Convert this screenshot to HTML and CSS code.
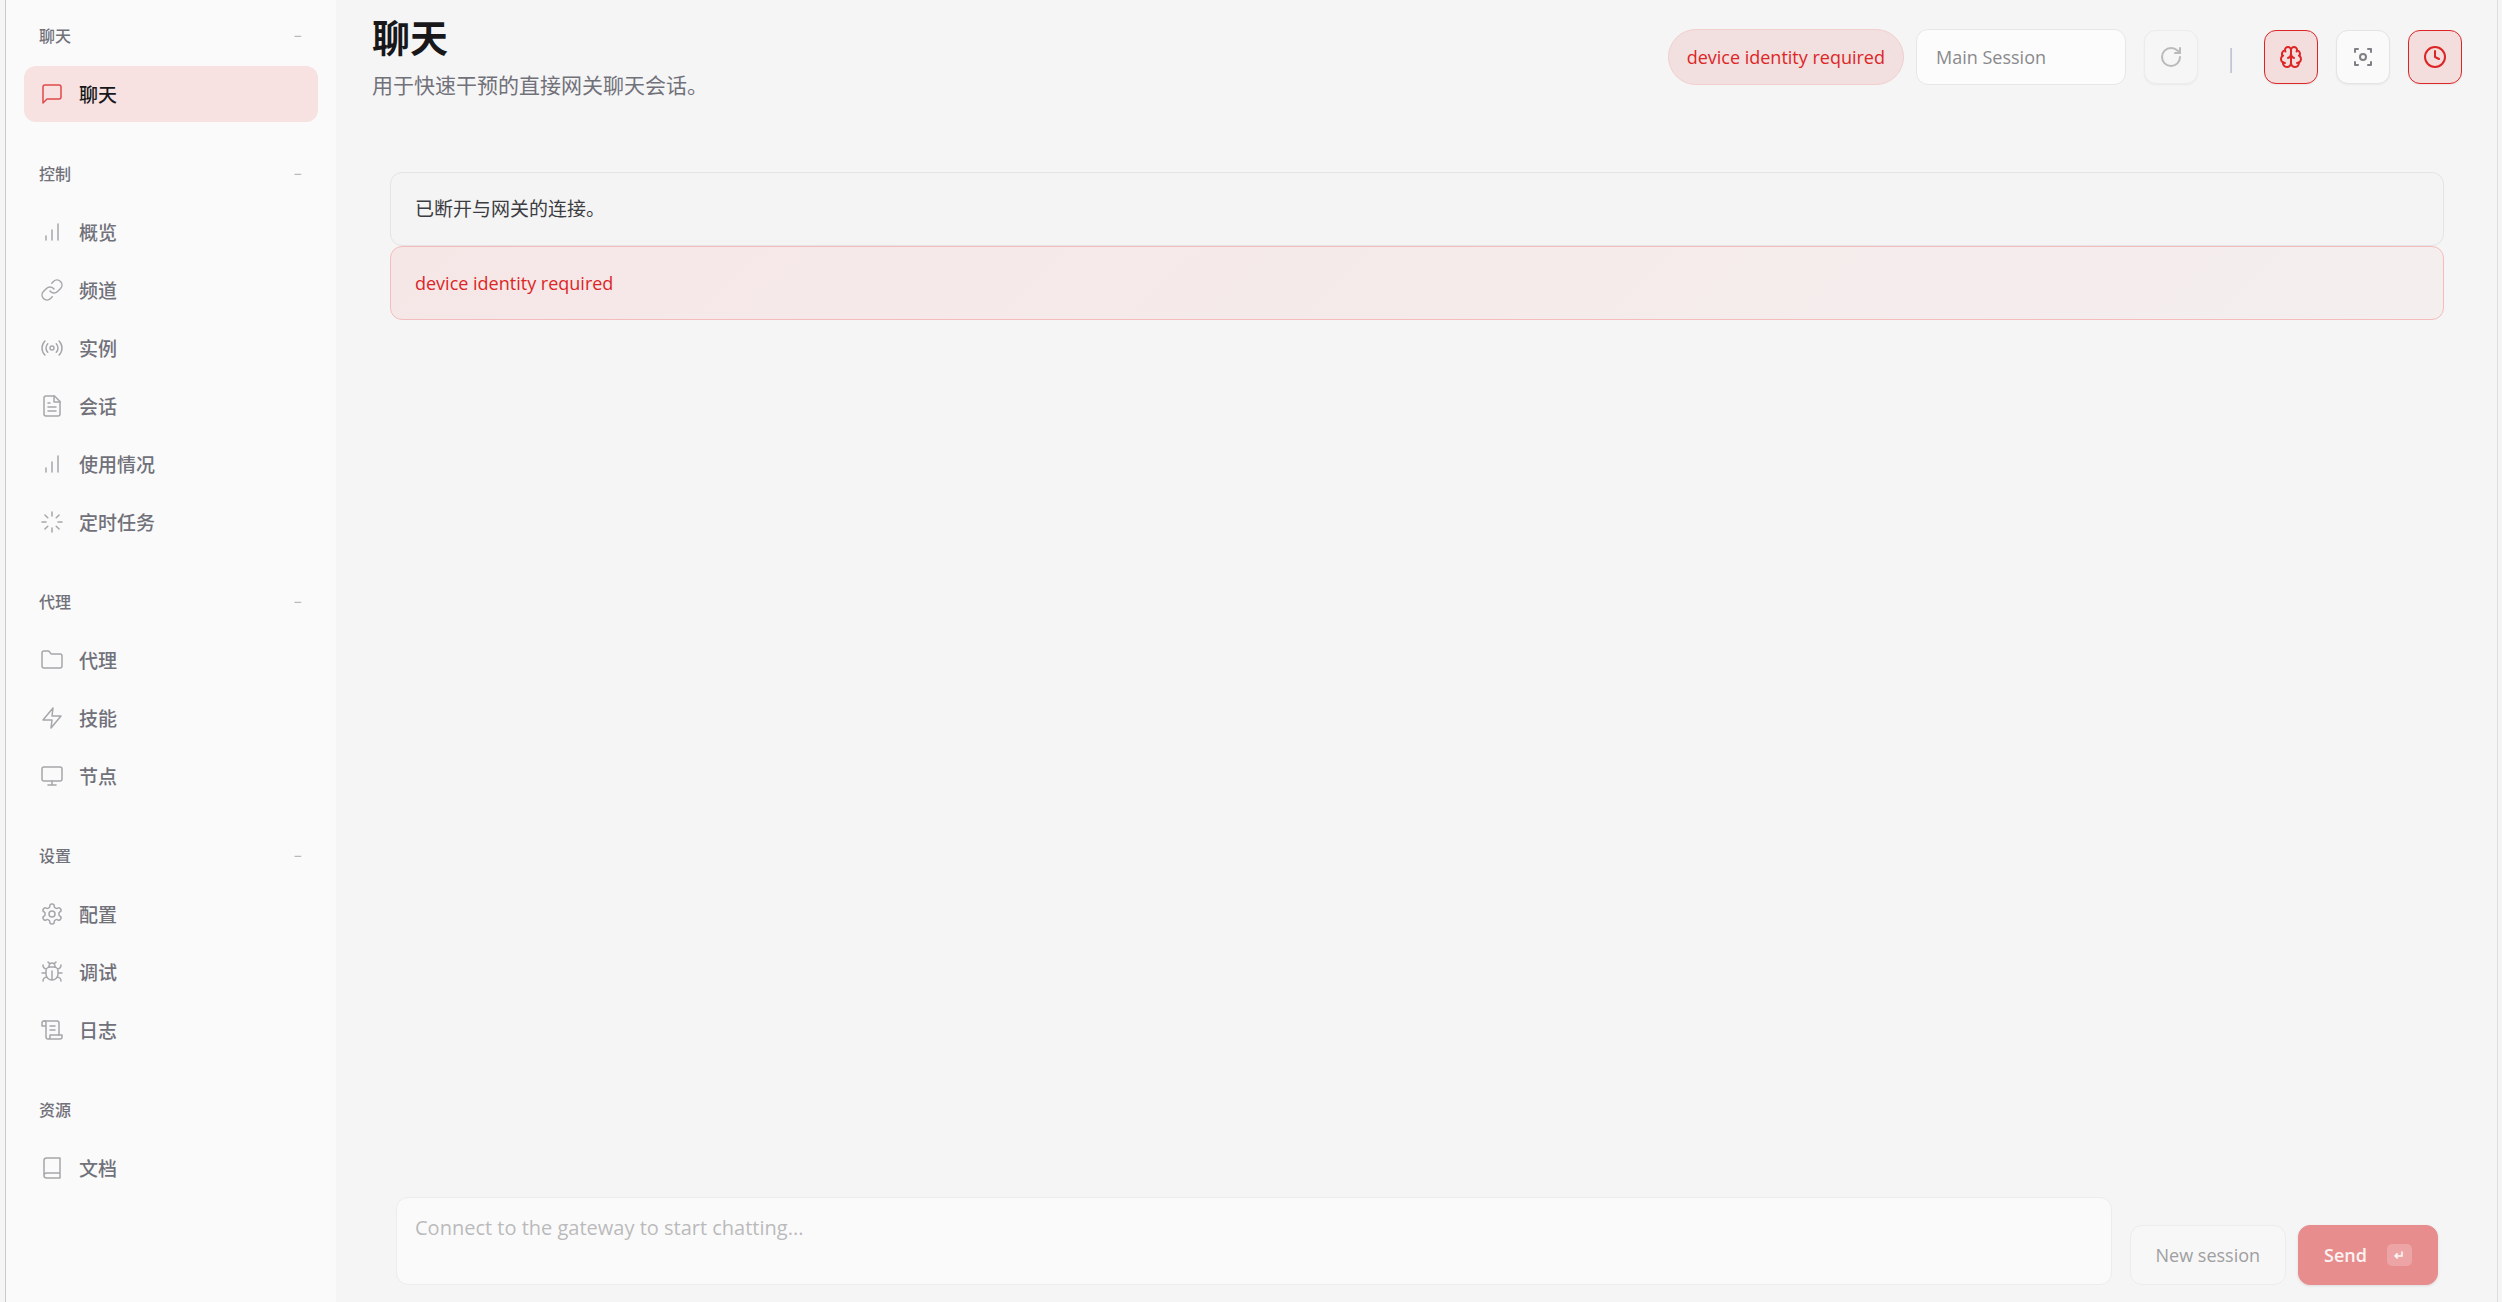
FILE: index.html
```html
<!DOCTYPE html>
<html lang="zh-CN">
  <head>
    <meta charset="UTF-8" />
    <meta name="viewport" content="width=device-width, initial-scale=1.0" />
    <title>聊天</title>
    <link rel="stylesheet" href="styles.css">
  </head>
  <body>
<div class="shell">
  <nav class="sidebar">
    <div class="nav-group">
      <button type="button" class="nav-label"><span>聊天</span><span class="nav-toggle">−</span></button>
      <a href="#chat" class="nav-item active">
        <svg class="icon" viewBox="0 0 24 24"><path d="M21 15a2 2 0 0 1-2 2H7l-4 4V5a2 2 0 0 1 2-2h14a2 2 0 0 1 2 2z"/></svg>
        <span>聊天</span>
      </a>
    </div>

    <div class="nav-group">
      <button type="button" class="nav-label"><span>控制</span><span class="nav-toggle">−</span></button>
      <a href="#overview" class="nav-item">
        <svg class="icon" viewBox="0 0 24 24"><path d="M12 20V10M18 20V4M6 20v-4"/></svg>
        <span>概览</span>
      </a>
      <a href="#channels" class="nav-item">
        <svg class="icon" viewBox="0 0 24 24"><path d="M10 13a5 5 0 0 0 7.54.54l3-3a5 5 0 0 0-7.07-7.07l-1.72 1.71"/><path d="M14 11a5 5 0 0 0-7.54-.54l-3 3a5 5 0 0 0 7.07 7.07l1.71-1.71"/></svg>
        <span>频道</span>
      </a>
      <a href="#instances" class="nav-item">
        <svg class="icon" viewBox="0 0 24 24"><circle cx="12" cy="12" r="2"/><path d="M16.24 7.76a6 6 0 0 1 0 8.49M7.76 16.24a6 6 0 0 1 0-8.49M19.07 4.93a10 10 0 0 1 0 14.14M4.93 19.07a10 10 0 0 1 0-14.14"/></svg>
        <span>实例</span>
      </a>
      <a href="#sessions" class="nav-item">
        <svg class="icon" viewBox="0 0 24 24"><path d="M14.5 2H6a2 2 0 0 0-2 2v16a2 2 0 0 0 2 2h12a2 2 0 0 0 2-2V7.5z"/><path d="M14 2v6h6M16 13H8M16 17H8M10 9H8"/></svg>
        <span>会话</span>
      </a>
      <a href="#usage" class="nav-item">
        <svg class="icon" viewBox="0 0 24 24"><path d="M12 20V10M18 20V4M6 20v-4"/></svg>
        <span>使用情况</span>
      </a>
      <a href="#cron" class="nav-item">
        <svg class="icon" viewBox="0 0 24 24"><path d="M12 2v4M12 18v4M4.93 4.93l2.83 2.83M16.24 16.24l2.83 2.83M2 12h4M18 12h4M4.93 19.07l2.83-2.83M16.24 7.76l2.83-2.83"/></svg>
        <span>定时任务</span>
      </a>
    </div>

    <div class="nav-group">
      <button type="button" class="nav-label"><span>代理</span><span class="nav-toggle">−</span></button>
      <a href="#agents" class="nav-item">
        <svg class="icon" viewBox="0 0 24 24"><path d="M20 20a2 2 0 0 0 2-2V8a2 2 0 0 0-2-2h-7.9a2 2 0 0 1-1.69-.9L9.6 3.9A2 2 0 0 0 7.93 3H4a2 2 0 0 0-2 2v13a2 2 0 0 0 2 2Z"/></svg>
        <span>代理</span>
      </a>
      <a href="#skills" class="nav-item">
        <svg class="icon" viewBox="0 0 24 24"><path d="M13 2L3 14h9l-1 8 10-12h-9l1-8z"/></svg>
        <span>技能</span>
      </a>
      <a href="#nodes" class="nav-item">
        <svg class="icon" viewBox="0 0 24 24"><rect x="2" y="3" width="20" height="14" rx="2"/><path d="M8 21h8M12 17v4"/></svg>
        <span>节点</span>
      </a>
    </div>

    <div class="nav-group">
      <button type="button" class="nav-label"><span>设置</span><span class="nav-toggle">−</span></button>
      <a href="#config" class="nav-item">
        <svg class="icon" viewBox="0 0 24 24"><path d="M12.22 2h-.44a2 2 0 0 0-2 2v.18a2 2 0 0 1-1 1.73l-.43.25a2 2 0 0 1-2 0l-.15-.08a2 2 0 0 0-2.73.73l-.22.38a2 2 0 0 0 .73 2.73l.15.1a2 2 0 0 1 1 1.72v.51a2 2 0 0 1-1 1.74l-.15.09a2 2 0 0 0-.73 2.73l.22.38a2 2 0 0 0 2.73.73l.15-.08a2 2 0 0 1 2 0l.43.25a2 2 0 0 1 1 1.73V20a2 2 0 0 0 2 2h.44a2 2 0 0 0 2-2v-.18a2 2 0 0 1 1-1.73l.43-.25a2 2 0 0 1 2 0l.15.08a2 2 0 0 0 2.73-.73l.22-.39a2 2 0 0 0-.73-2.73l-.15-.08a2 2 0 0 1-1-1.74v-.5a2 2 0 0 1 1-1.74l.15-.09a2 2 0 0 0 .73-2.73l-.22-.38a2 2 0 0 0-2.73-.73l-.15.08a2 2 0 0 1-2 0l-.43-.25a2 2 0 0 1-1-1.73V4a2 2 0 0 0-2-2z"/><circle cx="12" cy="12" r="3"/></svg>
        <span>配置</span>
      </a>
      <a href="#debug" class="nav-item">
        <svg class="icon" viewBox="0 0 24 24"><path d="m8 2 1.88 1.88M14.12 3.88 16 2M9 7.13v-1a3.003 3.003 0 1 1 6 0v1"/><path d="M12 20c-3.3 0-6-2.7-6-6v-3a4 4 0 0 1 4-4h4a4 4 0 0 1 4 4v3c0 3.3-2.7 6-6 6M12 20v-9M6.53 9C4.6 8.8 3 7.1 3 5M6 13H2M3 21c0-2.1 1.7-3.9 3.8-4M20.97 5c0 2.1-1.6 3.8-3.5 4M22 13h-4M17.2 17c2.1.1 3.8 1.9 3.8 4"/></svg>
        <span>调试</span>
      </a>
      <a href="#logs" class="nav-item">
        <svg class="icon" viewBox="0 0 24 24"><path d="M8 21h12a2 2 0 0 0 2-2v-2H10v2a2 2 0 1 1-4 0V5a2 2 0 1 0-4 0v3h4"/><path d="M19 17V5a2 2 0 0 0-2-2H4M15 8h-5M15 12h-5"/></svg>
        <span>日志</span>
      </a>
    </div>

    <div class="nav-group">
      <div class="nav-label"><span>资源</span></div>
      <a href="#docs" class="nav-item">
        <svg class="icon" viewBox="0 0 24 24"><path d="M4 19.5v-15A2.5 2.5 0 0 1 6.5 2H20v20H6.5a2.5 2.5 0 0 1 0-5H20"/></svg>
        <span>文档</span>
      </a>
    </div>
  </nav>

  <main class="content">
    <header class="content-header">
      <div class="heading">
        <h1>聊天</h1>
        <p>用于快速干预的直接网关聊天会话。</p>
      </div>
      <div class="controls">
        <span class="pill">device identity required</span>
        <select class="session-select" aria-label="Session" disabled>
          <option>Main Session</option>
        </select>
        <button type="button" class="btn-icon" aria-label="Refresh" disabled>
          <svg class="icon" viewBox="0 0 24 24"><path d="M21 12a9 9 0 1 1-9-9c2.52 0 4.93 1 6.74 2.74L21 8"/><path d="M21 3v5h-5"/></svg>
        </button>
        <span class="separator">|</span>
        <button type="button" class="btn-icon on" aria-label="Thinking">
          <svg class="icon" viewBox="0 0 24 24"><path d="M12 5a3 3 0 1 0-5.997.125 4 4 0 0 0-2.526 5.77 4 4 0 0 0 .556 6.588A4 4 0 1 0 12 18Z"/><path d="M12 5a3 3 0 1 1 5.997.125 4 4 0 0 1 2.526 5.77 4 4 0 0 1-.556 6.588A4 4 0 1 1 12 18Z"/><path d="M15 13a4.5 4.5 0 0 1-3-4 4.5 4.5 0 0 1-3 4M17.599 6.5a3 3 0 0 0 .399-1.375M6.003 5.125A3 3 0 0 0 6.401 6.5M3.477 10.896a4 4 0 0 1 .585-.396M19.938 10.5a4 4 0 0 1 .585.396M6 18a4 4 0 0 1-1.967-.516M19.967 17.484A4 4 0 0 1 18 18"/></svg>
        </button>
        <button type="button" class="btn-icon" aria-label="Focus">
          <svg class="icon" viewBox="0 0 24 24"><path d="M4 7V4h3M20 7V4h-3M4 17v3h3M20 17v3h-3"/><circle cx="12" cy="12" r="3"/></svg>
        </button>
        <button type="button" class="btn-icon on" aria-label="Cron sessions">
          <svg class="icon" viewBox="0 0 24 24"><circle cx="12" cy="12" r="10"/><path d="M12 6v6l4 2"/></svg>
        </button>
      </div>
    </header>

    <section class="chat">
      <div class="callout">已断开与网关的连接。</div>
      <div class="callout danger">device identity required</div>
      <div class="thread"></div>
      <form class="compose">
        <textarea aria-label="Message" placeholder="Connect to the gateway to start chatting..." disabled></textarea>
        <button type="button" class="btn" disabled>New session</button>
        <button type="submit" class="btn primary" disabled>Send <kbd>↵</kbd></button>
      </form>
    </section>
  </main>
</div>
  </body>
</html>
```

FILE: styles.css
```css
* {
  margin: 0;
  padding: 0;
  box-sizing: border-box;
}

body {
  background-color: #f5f5f5;
  font-family: "Open Sans", "Noto Sans CJK SC", sans-serif;
  font-size: 19px;
  color: #3c3c43;
}

button,
select,
textarea,
kbd {
  font-family: inherit;
  font-size: 18px;
}

.shell {
  display: grid;
  grid-template-columns: 330px 1fr;
  height: 100vh;
  margin: 0 4px 0 5px;
  border-left: 1px solid #cacaca;
  border-right: 1px solid #dedede;
  overflow: hidden;
}

.icon {
  width: 24px;
  height: 24px;
  fill: none;
  stroke: currentColor;
  stroke-width: 1.5;
  stroke-linecap: round;
  stroke-linejoin: round;
  flex: none;
}

/* sidebar */
.sidebar {
  background-color: #fafafa;
  padding: 17px 18px 24px;
}

.nav-group {
  display: flex;
  flex-direction: column;
  gap: 2px;
  margin-bottom: 33px;
}

.nav-label {
  display: flex;
  justify-content: space-between;
  align-items: center;
  height: 36px;
  padding: 0 16px 0 15px;
  margin-bottom: 11px;
  border: none;
  background: none;
  font-size: 16px;
  font-weight: 500;
  color: #71717a;
}

.nav-toggle {
  font-size: 14px;
  color: #a9a9af;
}

.nav-item {
  display: flex;
  align-items: center;
  gap: 15px;
  height: 56px;
  padding: 0 16px;
  border-radius: 12px;
  font-weight: 500;
  color: #71717a;
  text-decoration: none;
}

.nav-item .icon {
  color: #a6a6ab;
}

.nav-item.active {
  background-color: #f7e1e1;
  color: #18181b;
}

.nav-item.active .icon {
  color: #e04a4a;
}

/* content */
.content {
  display: flex;
  flex-direction: column;
  min-width: 0;
  padding: 12px 35px 17px 36px;
}

.content-header {
  display: flex;
  justify-content: space-between;
  align-items: flex-start;
  height: 160px;
}

.heading h1 {
  font-size: 38px;
  line-height: 50px;
  color: #18181b;
}

.heading p {
  font-size: 21px;
  line-height: 30px;
  margin-top: 8px;
  color: #71717a;
}

.controls {
  display: flex;
  align-items: center;
  gap: 18px;
  margin-top: 17px;
}

.pill {
  height: 56px;
  margin-right: -6px;
  padding: 0 18px;
  border: 1px solid #f2cfcf;
  border-radius: 28px;
  background-color: #f2dfdf;
  color: #dc2626;
  font-size: 18px;
  font-weight: 500;
  line-height: 54px;
}

.session-select {
  appearance: none;
  width: 210px;
  height: 56px;
  padding: 0 19px;
  border: 1px solid #e7e7e9;
  border-radius: 12px;
  background-color: #fcfcfc;
  color: #8a8a8d;
  opacity: 1;
}

.btn-icon {
  display: flex;
  justify-content: center;
  align-items: center;
  width: 54px;
  height: 54px;
  border: 1px solid #e4e4e7;
  border-radius: 12px;
  background-color: #fafafa;
  box-shadow: 0 1px 2px rgba(0, 0, 0, 0.05);
  color: #7f7f86;
}

.btn-icon .icon {
  stroke-width: 2;
}

.btn-icon:disabled {
  border-color: #ececed;
  background-color: #f6f6f6;
  color: #bababc;
}

.btn-icon.on {
  border-color: #dc2626;
  background-color: #f3dddd;
  color: #dc2626;
}

.separator {
  width: 30px;
  text-align: center;
  font-size: 26px;
  font-weight: 300;
  color: #a9b3c4;
}

/* chat */
.chat {
  display: flex;
  flex: 1;
  flex-direction: column;
  padding: 0 18px;
}

.callout {
  padding: 22px 24px;
  border: 1px solid #e4e4e6;
  border-radius: 12px;
  background-color: #f4f4f4;
  line-height: 28px;
}

.callout.danger {
  border-color: #f4bcbc;
  background: linear-gradient(135deg, #f6e7e7, #f4eeee);
  color: #dc2626;
  font-size: 18px;
}

.thread {
  flex: 1;
}

.compose {
  display: flex;
  align-items: flex-end;
  gap: 12px;
  padding: 0 6px;
}

.compose textarea {
  flex: 1;
  height: 88px;
  margin-right: 6px;
  padding: 15px 18px;
  border: 1px solid #ececed;
  border-radius: 12px;
  background-color: #fafafa;
  font-size: 20px;
  line-height: 30px;
  resize: none;
}

.compose textarea::placeholder {
  color: #bababc;
}

.btn {
  height: 60px;
  padding: 0 25px;
  border: 1px solid #ececed;
  border-radius: 12px;
  background-color: #f7f7f7;
  color: #9f9fa1;
  font-weight: 500;
}

.btn.primary {
  display: flex;
  align-items: center;
  gap: 20px;
  border-color: #e88d8d;
  background-color: #e88d8d;
  box-shadow: 0 1px 3px rgba(0, 0, 0, 0.1);
  color: #fcf3f3;
  font-weight: 600;
}

.btn kbd {
  width: 25px;
  height: 22px;
  border-radius: 5px;
  background-color: #eca4a4;
  font-size: 13px;
  line-height: 22px;
}
```
